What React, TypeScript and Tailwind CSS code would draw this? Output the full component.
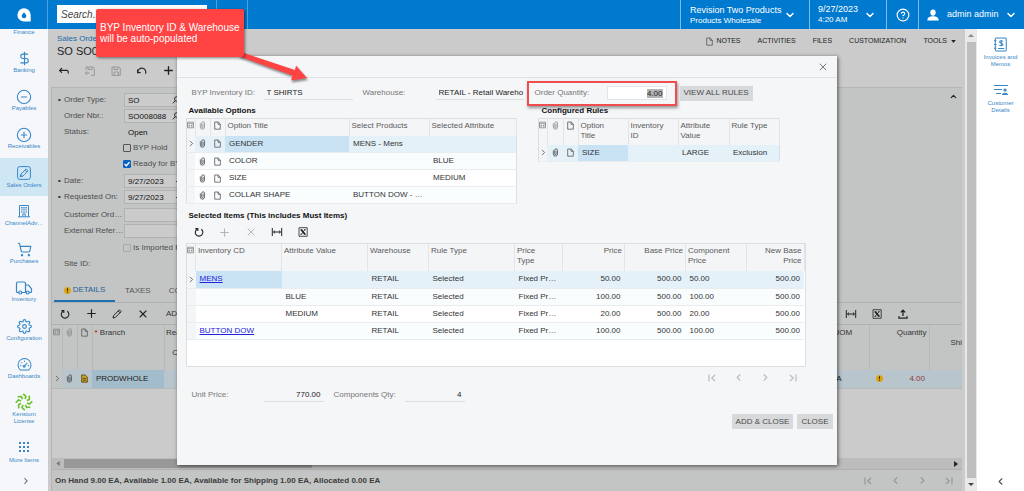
import React, { useEffect, useRef } from "react";
import {
  ChevronDown,
  ChevronLeft,
  ChevronRight,
  CircleHelp,
  CircleMinus,
  CirclePlus,
  DollarSign,
  Plus,
  ShoppingCart,
  Truck,
  X,
} from "lucide-react";
import { FiSettings } from "react-icons/fi";

/* ---------- icons ---------- */

function Clip({ dim = false }: { dim?: boolean }) {
  return (
    <svg viewBox="0 0 8 10" className={`mx-auto h-[9px] w-[7px] ${dim ? "text-[#8c8c8c]" : "text-[#4a4a4a]"}`} fill="none" stroke="currentColor" strokeWidth=".9">
      <path d="M1.5 2.5v4.3a2.4 2.4 0 0 0 4.800 0V2.4a1.600 1.600 0 0 0-3.200 0v4.4a.8.8 0 0 0 1.600 0V3" />
    </svg>
  );
}

function Doc() {
  return (
    <svg viewBox="0 0 8 10" className="mx-auto h-[9px] w-[7px] text-[#555]" fill="none" stroke="currentColor" strokeWidth=".9">
      <path d="M.8 1h4L7.2 3.4V9.2H.8zM4.6 1v2.6h2.6" />
    </svg>
  );
}

function YellowDoc() {
  return (
    <svg viewBox="0 0 8 10" className="mx-auto h-[9px] w-[7px]">
      <path d="M.8 1h4L7.2 3.4V9.2H.8z" fill="#c9a227" stroke="#4a3c06" strokeWidth=".9" />
      <path d="M2.2 5h3.4M2.2 7h3.4" stroke="#4a3c06" strokeWidth=".9" />
    </svg>
  );
}

function RowsIcon() {
  return (
    <svg viewBox="0 0 8 8" className="mx-auto h-2 w-[7px] text-[#808080]" fill="none" stroke="currentColor" strokeWidth=".9">
      <path d="M.6.8h6.8v6.4H.6zM.6 2.6h6.8M2 4.9h1.4M4.6 4.9H6M2.4 4v2M5.5 4v2" />
    </svg>
  );
}

function RowArrow() {
  return <ChevronRight className="mx-auto h-[9px] w-[9px] text-[#555]" strokeWidth={2.2} />;
}

function Refresh() {
  return (
    <svg viewBox="0 0 12 12" className="h-3 w-3" fill="none" stroke="currentColor" strokeWidth="1.1">
      <path d="M4.300 3A3.800 3.800 0 1 0 8.200 3.200" />
      <path d="M2.400 2.600h2.400V5" />
    </svg>
  );
}

function FitColumns() {
  return (
    <svg viewBox="0 0 12 12" className="h-3 w-3" fill="none" stroke="currentColor" strokeWidth="1">
      <path d="M1.3 2v8M10.700 2v8M2.5 6h7M4 4.600 2.5 6 4 7.400M8 4.600 9.5 6 8 7.400" />
    </svg>
  );
}

function Excel() {
  return (
    <svg viewBox="0 0 12 12" className="h-3 w-3" fill="none" stroke="currentColor">
      <path d="M2 1.7h8.2v8.6H2z" strokeWidth=".8" />
      <path d="M4.2 3.7l3.8 4.6" strokeWidth="1.8" />
      <path d="M8 3.7 4.2 8.3M3.4 3.7h2M6.8 8.3h2M7 3.7h1.8M3.4 8.3h1.8" strokeWidth=".8" />
    </svg>
  );
}

function Upload() {
  return (
    <svg viewBox="0 0 12 12" className="h-3 w-3" fill="none" stroke="currentColor" strokeWidth="1.3">
      <path d="M6 8V2.6M3.8 4.4 6 2.2l2.2 2.2M2 8.2v2h8v-2" />
    </svg>
  );
}

function Pencil() {
  return (
    <svg viewBox="0 0 12 12" className="h-3 w-3" fill="none" stroke="currentColor" strokeWidth="1">
      <path d="M2 10l.6-2.4L8.4 1.8l1.8 1.8-5.8 5.8zM7.3 3l1.8 1.8" />
    </svg>
  );
}

function Back() {
  return (
    <svg viewBox="0 0 12 12" className="h-3 w-3" fill="none" stroke="currentColor" strokeWidth="1.1">
      <path d="M4 3 1.6 5.4 4 7.8M1.8 5.4h7.4l1 1V8.600" />
    </svg>
  );
}

function Undo() {
  return (
    <svg viewBox="0 0 12 12" className="h-3 w-3" fill="none" stroke="currentColor" strokeWidth="1.1">
      <path d="M1.600 4.600v3h3M1.900 7.300A4 3.800 0 1 1 9.400 8.800" />
    </svg>
  );
}

function Save({ back = false }: { back?: boolean }) {
  return (
    <svg viewBox="0 0 12 12" className="h-3 w-3" fill="none" stroke="currentColor" strokeWidth="1">
      <path d={back ? "M2 5V2h6.8L10.3 3.5v6.8H7M4 2v2.5h4V2M1.5 8h4M3.2 6.2 1.5 8l1.7 1.8" : "M2 2h6.8L10.3 3.5v6.8H2zM4 2v2.5h4V2M4 10.2V7h4.4v3.2"} />
    </svg>
  );
}

function PageEdge({ end = false }: { end?: boolean }) {
  return (
    <svg viewBox="0 0 10 10" className="h-[10px] w-[10px]" fill="none" stroke="currentColor" strokeWidth="1.2">
      <path d={end ? "M2 2 5.2 5 2 8M8 1.4v7.2" : "M8 2 4.8 5 8 8M2 1.4v7.2"} />
    </svg>
  );
}

function Warning() {
  return (
    <svg viewBox="0 0 8 8" className="h-[7px] w-[7px] shrink-0">
      <circle cx="4" cy="4" r="4" fill="#dba50f" />
      <path d="M4 1.5v3M4 5.4v1.1" stroke="#3a2b00" strokeWidth="1.2" />
    </svg>
  );
}

function Magnifier() {
  return (
    <svg viewBox="0 0 8 8" className="h-2 w-2 shrink-0" fill="none" stroke="#333" strokeWidth="1">
      <circle cx="4.8" cy="3" r="2.3" />
      <path d="M3.2 4.8.8 7.4" />
    </svg>
  );
}

function Building() {
  return (
    <svg viewBox="0 0 14 14" className="h-[14px] w-[14px]" fill="none" stroke="currentColor" strokeWidth="1">
      <path d="M2.5 12.5V1.5h9v11M1 12.8h12M5.8 12.5V10h2.4v2.5" />
      <path d="M4.2 3.7h1.4M6.3 3.7h1.4M8.4 3.7h1.4M4.2 5.9h1.4M6.3 5.9h1.4M8.4 5.9h1.4M4.2 8.1h1.4M6.3 8.1h1.4M8.4 8.1h1.4" strokeWidth="1.4" />
    </svg>
  );
}

function SalesIcon() {
  return (
    <svg viewBox="0 0 14 14" className="h-[14px] w-[14px]" fill="none" stroke="currentColor" strokeWidth="1">
      <rect x=".6" y=".6" width="12.8" height="12.8" rx="2.2" />
      <path d="M3.2 10.8l.6-2.5 5.4-5.4 1.9 1.9-5.4 5.4zM8 4.2l1.8 1.8M3.8 8.5l1.7 1.7" />
    </svg>
  );
}

function Dial() {
  return (
    <svg viewBox="0 0 16 14" className="h-[13px] w-[15px]" fill="none" stroke="currentColor" strokeWidth="1.100">
      <path d="M3.400 12.800A7 7 0 1 1 12.600 12.800z" />
      <path d="M7.300 9.200 11 5.200M3.400 8.200H4.600M4.800 4.600l.8.8M8 3v1.200M11.600 8.200h1.200" />
      <circle cx="7.600" cy="9" r="1" />
    </svg>
  );
}

function Pinwheel() {
  return (
    <svg viewBox="-9 -9 18 18" className="h-[18px] w-[18px]" fill="none" stroke="#6cc02b" strokeWidth="1.6">
      {[0, 45, 90, 135, 180, 225, 270, 315].map((a) => (
        <path key={a} d="M1-3 2-5.600-.8-8.200" transform={`rotate(${a})`} />
      ))}
    </svg>
  );
}

function Dots() {
  return (
    <svg viewBox="0 0 12 12" className="h-3 w-3" fill="currentColor">
      {[1, 5, 9].map((y) => [1, 5, 9].map((x) => <rect key={`${x}-${y}`} x={x} y={y} width="2" height="2" />))}
    </svg>
  );
}

function InvoiceIcon() {
  return (
    <svg viewBox="0 0 14 16" className="h-[15px] w-[13px]" fill="none" stroke="currentColor" strokeWidth="1.1">
      <rect x="1.4" y="1" width="11.8" height="14" rx="1" />
      <path d="M0 4h2.6M0 8h2.6M0 12h2.6M4.4 12.4h6.6M9.6 4.6C8.6 3.7 6 3.7 6 5.3c0 1.7 3.6.9 3.6 2.7 0 1.7-2.8 1.6-3.8.6M7.8 3.2v6.8" />
    </svg>
  );
}

function CustomerIcon() {
  return (
    <svg viewBox="0 0 14 12" className="h-3 w-[14px]" fill="none" stroke="currentColor" strokeWidth="1.2">
      <path d="M0 1.5h14M0 5.5h8M2 9.5h5" />
      <circle cx="11" cy="6" r="1.6" fill="currentColor" stroke="none" />
      <path d="M8 11c0-3 6-3 6 0z" fill="currentColor" stroke="none" />
    </svg>
  );
}

/* ---------- shell ---------- */

const navItems: { label: string; icon: React.ReactNode; active?: boolean }[] = [
  { label: "Banking", icon: <DollarSign className="h-[15px] w-[15px]" strokeWidth={1.8} /> },
  { label: "Payables", icon: <CircleMinus className="h-4 w-4" strokeWidth={1.6} /> },
  { label: "Receivables", icon: <CirclePlus className="h-4 w-4" strokeWidth={1.6} /> },
  { label: "Sales Orders", icon: <SalesIcon />, active: true },
  { label: "ChannelAdv…", icon: <Building /> },
  { label: "Purchases", icon: <ShoppingCart className="h-[15px] w-[15px]" strokeWidth={1.8} /> },
  { label: "Inventory", icon: <Truck className="h-[18px] w-[18px]" strokeWidth={1.6} /> },
  { label: "Configuration", icon: <FiSettings className="h-[15px] w-[15px]" strokeWidth={1.8} /> },
  { label: "Dashboards", icon: <Dial /> },
];

function TopBar() {
  return (
    <header className="flex h-[29px] shrink-0 items-stretch bg-[#007acf] text-white">
      <div className="flex w-12 shrink-0 items-center justify-center border-r border-[#4da2dd]">
        <svg viewBox="0 0 14 14" className="h-[14px] w-[14px]">
          <path d="M7 .3a6.7 6.7 0 0 1 6.7 6.7v6.5H7A6.6 6.6 0 0 1 7 .3zM7 4.2 4.9 7a2.3 2.3 0 1 0 4.2 0z" fill="white" fillRule="evenodd" />
        </svg>
      </div>
      <div className="flex items-start border-r border-[#4da2dd] py-[5px] pr-[9px] pl-[9px]">
        <input aria-label="Search" placeholder="Search..." className="h-[18px] w-[150px] bg-white px-1 text-[10px] text-[#333] italic outline-none placeholder:text-[#444]" />
      </div>
      <div className="w-[31px] border-r border-[#4da2dd]" />
      <div className="flex-1" />
      <button className="flex w-[129px] items-center justify-between border-l border-[#7fbbe6] pr-[17px] pl-[9px] text-left">
        <span>
          <span className="block text-[9px] leading-[11px] whitespace-nowrap">Revision Two Products</span>
          <span className="block text-[8px] leading-[9px] whitespace-nowrap">Products Wholesale</span>
        </span>
        <ChevronDown className="-mr-1 h-3 w-3 shrink-0" strokeWidth={3} />
      </button>
      <button className="flex w-[77px] items-center justify-between border-l border-[#7fbbe6] pr-[10px] pl-2 text-left">
        <span>
          <span className="block text-[9px] leading-[11px]">9/27/2023</span>
          <span className="block text-[8px] leading-[10px]">4:20 AM</span>
        </span>
        <ChevronDown className="h-3 w-3" strokeWidth={3} />
      </button>
      <button aria-label="Help" className="flex w-8 items-center justify-center border-l border-[#7fbbe6]">
        <CircleHelp className="h-[14px] w-[14px]" strokeWidth={2} />
      </button>
      <button className="flex w-[106px] items-center border-l border-[#7fbbe6] pr-[7px] pl-2 text-[9px]">
        <svg viewBox="0 0 12 12" className="h-3 w-3" fill="white">
          <ellipse cx="6" cy="3.6" rx="2.7" ry="3.1" />
          <path d="M.3 11.5c0-3 2.4-4.2 5.7-4.2s5.7 1.2 5.7 4.2z" />
        </svg>
        <span className="ml-2">admin admin</span>
        <ChevronDown className="ml-auto h-3 w-3" strokeWidth={3} />
      </button>
    </header>
  );
}

function SideNav() {
  return (
    <nav className="flex w-12 shrink-0 flex-col bg-[#f5f7fa] text-center text-[6px] leading-[7px] text-[#3787c8]">
      <a href="#finance" className="h-[14px] shrink-0">Finance</a>
      {navItems.map((n) => (
        <a key={n.label} href="#nav" className={`flex min-h-0 shrink-0 grow basis-[38px] flex-col items-center ${n.active ? "bg-[#cfe6f5]" : ""}`}>
          <span className="flex h-6 items-center justify-center pt-[7px]">{n.icon}</span>
          <span className="whitespace-nowrap">{n.label}</span>
        </a>
      ))}
      <a href="#kensium" className="flex h-[46px] shrink-0 flex-col items-center">
        <span className="flex h-6 items-center pt-[7px]"><Pinwheel /></span>
        <span className="w-8">Kensium License</span>
      </a>
      <a href="#more" className="flex h-[38px] shrink-0 flex-col items-center">
        <span className="flex h-6 items-center pt-[5px]"><Dots /></span>
        <span>More Items</span>
      </a>
      <button aria-label="Expand menu" className="flex h-5 shrink-0 items-center justify-center text-[#555]">
        <ChevronRight className="ml-1 h-[10px] w-[10px]" strokeWidth={2.5} />
      </button>
    </nav>
  );
}

function RightPanel() {
  return (
    <aside className="flex w-[47px] shrink-0 flex-col items-center bg-white text-center text-[6px] leading-[7px] text-[#3787c8]">
      <a href="#invoices" className="mt-2 flex flex-col items-center gap-[2px]">
        <InvoiceIcon />
        <span className="w-9 whitespace-nowrap">Invoices and<br />Memos</span>
      </a>
      <a href="#customer" className="mt-4 flex flex-col items-center gap-1">
        <CustomerIcon />
        <span className="w-9">Customer Details</span>
      </a>
      <button aria-label="Collapse panel" className="mt-auto mb-1 text-[#555]">
        <ChevronLeft className="h-[11px] w-[11px]" strokeWidth={2.5} />
      </button>
    </aside>
  );
}

function VerticalScroll() {
  return (
    <div className="flex w-[12px] shrink-0 flex-col items-center bg-[#e9e9e9]">
      <svg viewBox="0 0 8 6" className="my-1 h-[5px] w-[6px]"><path d="M0 5h8L4 1z" fill="#8a8a8a" /></svg>
      <div className="w-[9px] flex-1 bg-[#bfbfbf]" />
      <svg viewBox="0 0 8 6" className="my-1 h-[5px] w-[6px]"><path d="M0 1h8L4 5z" fill="#444" /></svg>
    </div>
  );
}

/* ---------- order form ---------- */

function FormRow({ label, id, value, required, kind = "box" }: { label: string; id: string; value?: string; required?: boolean; kind?: "box" | "search" | "date" | "plain" }) {
  return (
    <div className="flex h-4 items-center">
      <span className="w-[12px] pl-[6px] text-[8px] leading-none font-bold text-[#333]">{required ? "•" : ""}</span>
      <label htmlFor={id} className="w-[60px] text-[#4d4d4d]">{label}</label>
      <div className={`flex h-[14px] w-[60px] items-center border ${kind === "plain" ? "border-transparent" : "border-[#b1b3b3] bg-[#cbcbcb]"}`}>
        <input id={id} readOnly defaultValue={value} className="h-3 w-[47px] bg-transparent pl-[3px] text-[8px] text-[#111] outline-none" />
        {kind === "search" && <Magnifier />}
        {kind === "date" && <span className="ml-1 h-px w-2 bg-[#444]" />}
      </div>
    </div>
  );
}

function CheckRow({ label, id, checked, muted }: { label: string; id: string; checked?: boolean; muted?: boolean }) {
  return (
    <div className="flex h-4 items-center pl-[71px]">
      <span className="relative flex">
        <input id={id} type="checkbox" defaultChecked={checked} className={`h-2 w-2 appearance-none rounded-[1px] border ${checked ? "border-[#0a61c4] bg-[#0a61c4]" : muted ? "border-[#a8a8a8]" : "border-[#555]"}`} />
        {checked && (
          <svg viewBox="0 0 8 8" className="pointer-events-none absolute inset-0 h-2 w-2" fill="none" stroke="white" strokeWidth="1.3"><path d="M1.6 4 3.3 5.8 6.5 2.2" /></svg>
        )}
      </span>
      <label htmlFor={id} className="ml-[2px] whitespace-nowrap text-[#4d4d4d]">{label}</label>
    </div>
  );
}

function ToolButton({ label, children, faded }: { label: string; children: React.ReactNode; faded?: boolean }) {
  return (
    <button aria-label={label} className={`flex w-[26px] items-center justify-center ${faded ? "opacity-30" : ""}`}>
      {children}
    </button>
  );
}

function Pager() {
  return (
    <div className="flex items-center gap-px">
      <ToolButton label="First page"><PageEdge /></ToolButton>
      <ToolButton label="Previous page"><ChevronLeft className="h-[11px] w-[11px]" strokeWidth={2.5} /></ToolButton>
      <ToolButton label="Next page"><ChevronRight className="h-[11px] w-[11px]" strokeWidth={2.5} /></ToolButton>
      <ToolButton label="Last page"><PageEdge end /></ToolButton>
    </div>
  );
}

function OrderPage() {
  return (
    <div className="flex min-w-0 flex-1 flex-col pr-[3px] pl-[3px]">
      <div className="flex h-[58px] shrink-0 flex-col">
        <div className="flex items-start justify-between pt-[5px]">
          <div className="pl-[6px]">
            <a href="#orders" className="block text-[8px] leading-[10px] text-[#1f6aa8]">Sales Orders</a>
            <h1 className="text-[11px] leading-[14px] text-[#222]">SO SO008088</h1>
          </div>
          <div className="mt-[2px] flex gap-[17px] pr-[6px] text-[7px] leading-[10px] text-[#222]">
            <button className="flex items-center gap-[3px]"><Doc />NOTES</button>
            <button>ACTIVITIES</button>
            <button>FILES</button>
            <button>CUSTOMIZATION</button>
            <button className="flex items-center gap-1">TOOLS
              <svg viewBox="0 0 6 4" className="h-[3px] w-[5px]"><path d="M0 0h6L3 4z" fill="#222" /></svg>
            </button>
          </div>
        </div>
        <div className="mt-[6px] flex text-[#222]">
          <ToolButton label="Back"><Back /></ToolButton>
          <ToolButton label="Save and close" faded><Save back /></ToolButton>
          <ToolButton label="Save" faded><Save /></ToolButton>
          <ToolButton label="Undo"><Undo /></ToolButton>
          <ToolButton label="Add"><Plus className="h-[13px] w-[13px]" strokeWidth={2.5} /></ToolButton>
        </div>
      </div>

      <section className="flex shrink-0 items-start justify-between border-t border-l border-[#b4b6b6] bg-[#c3c5c5] pt-1 pb-2 text-[8px] leading-[10px]">
        <div className="flex flex-col">
          <FormRow id="type" label="Order Type:" value="SO" required kind="search" />
          <FormRow id="nbr" label="Order Nbr.:" value="SO008088" kind="search" />
          <FormRow id="status" label="Status:" value="Open" kind="plain" />
          <CheckRow id="hold" label="BYP Hold" />
          <CheckRow id="ready" label="Ready for BY" checked />
          <div className="mt-px">
            <FormRow id="date" label="Date:" value="9/27/2023" required kind="date" />
            <FormRow id="req" label="Requested On:" value="9/27/2023" required kind="date" />
          </div>
          <div className="mt-[2px]">
            <FormRow id="cust" label="Customer Ord…" />
            <FormRow id="ext" label="External Refer…" />
          </div>
          <div className="mt-px">
            <CheckRow id="imp" label="Is Imported F" muted />
            <FormRow id="site" label="Site ID:" kind="plain" />
          </div>
        </div>
        <button aria-label="Collapse" className="pr-1">
          <ChevronDown className="h-[9px] w-[9px] rotate-180 text-[#222]" strokeWidth={3} />
        </button>
      </section>

      <section className="flex min-h-0 flex-1 flex-col border-l border-[#b4b6b6] bg-[#c3c5c5] text-[8px] leading-[10px]">
        <div className="flex h-[23px] shrink-0 items-stretch border-b border-[#b0b2b2] pl-[2px]">
          <button className="flex w-[61px] items-center justify-center gap-[2px] border-b-2 border-[#1f6fae] text-[#1f5f96]"><Warning />DETAILS</button>
          <button className="pl-[10px] text-[#555]">TAXES</button>
          <button className="pl-[18px] text-[#555]">COMMISSIONS</button>
        </div>
        <div className="flex h-[22px] shrink-0 items-center border-b border-[#b0b2b2] text-[#222]">
          <ToolButton label="Refresh"><Refresh /></ToolButton>
          <ToolButton label="Add row"><Plus className="h-[13px] w-[13px]" strokeWidth={2.2} /></ToolButton>
          <ToolButton label="Edit"><Pencil /></ToolButton>
          <ToolButton label="Delete"><X className="h-3 w-3" strokeWidth={2.2} /></ToolButton>
          <button className="ml-[10px] text-[#333]">ADD ITEMS</button>
          <div className="ml-auto flex pr-[46px]">
            <ToolButton label="Fit columns"><FitColumns /></ToolButton>
            <ToolButton label="Export"><Excel /></ToolButton>
            <ToolButton label="Upload"><Upload /></ToolButton>
          </div>
        </div>
        <div className="min-h-0 flex-1 overflow-hidden bg-[#cbcbcb]">
          <table className="w-full table-fixed border-collapse">
            <colgroup>
              <col className="w-[10px]" /><col className="w-[15px]" /><col className="w-[15px]" /><col className="w-[72px]" /><col className="w-[40px]" /><col /><col className="w-[40px]" /><col className="w-[60px]" /><col className="w-[33px]" />
            </colgroup>
            <thead>
              <tr className="h-[45px] bg-[#c3c5c5] text-left align-top text-[#333] [&>th]:border-r [&>th]:border-[#b7b9b9] [&>th]:pt-[3px] [&>th]:font-medium">
                <th><RowsIcon /></th>
                <th><Clip dim /></th>
                <th><Doc /></th>
                <th className="pl-[2px]"><span className="text-[#b00]">*</span> Branch</th>
                <th className="pr-[10px] text-right">Reason<br />Inv.<br />Credit</th>
                <th />
                <th className="pl-1">UOM</th>
                <th className="pr-[2px] text-right">Quantity</th>
                <th className="border-none! pt-[13px]! text-right">Shi</th>
              </tr>
            </thead>
            <tbody>
              <tr className="h-[18px] border-b border-[#b7b9b9] bg-[#b9c5cd] text-[#222]">
                <td className="bg-[#c3c5c5]"><RowArrow /></td>
                <td><Clip /></td>
                <td><YellowDoc /></td>
                <td className="bg-[#a3bccb] pl-1">PRODWHOLE</td>
                <td />
                <td />
                <td className="pl-[2px]">EA</td>
                <td><span className="flex items-center justify-between pr-1 pl-[7px] text-[#8c3a3f]"><Warning />4.00</span></td>
                <td />
              </tr>
            </tbody>
          </table>
        </div>
        <div className="flex h-[11px] shrink-0 items-center justify-between bg-[#bcbcbc] pr-1 pl-1">
          <svg viewBox="0 0 4 6" className="mr-1 h-[5px] w-1"><path d="M4 0v6L0 3z" fill="#777" /></svg>
          <div className="h-[9px] w-[248px] bg-[#989898]" />
          <div className="flex-1" />
          <svg viewBox="0 0 4 6" className="h-[6px] w-1"><path d="M0 0v6l4-3z" fill="#222" /></svg>
        </div>
        <div className="flex h-[22px] shrink-0 items-center justify-between border-t border-[#b0b2b2] pl-[3px] font-bold text-[#3c3c3c]">
          <span>On Hand 9.00 EA, Available 1.00 EA, Available for Shipping 1.00 EA, Allocated 0.00 EA</span>
          <div className="text-[#979797]"><Pager /></div>
        </div>
      </section>
    </div>
  );
}

/* ---------- dialog ---------- */

const headRow = "bg-[#f4f5f7] text-left align-top text-[#5a5a5a] [&>th]:border-r [&>th]:border-[#e2e4e6] [&>th]:px-[2px] [&>th]:pt-[2px] [&>th]:font-medium";
const bodyRow = "h-[17px] border-b border-[#e9edf0] [&>td]:whitespace-nowrap [&>td]:overflow-hidden [&>td]:text-ellipsis [&>td]:px-1";
const narrow = "px-0!";

const options = [
  ["GENDER", "MENS - Mens", ""],
  ["COLOR", "", "BLUE"],
  ["SIZE", "", "MEDIUM"],
  ["COLLAR SHAPE", "BUTTON DOW - …", ""],
];

const items = [
  ["MENS", "", "50.00"],
  ["", "BLUE", "100.00"],
  ["", "MEDIUM", "20.00"],
  ["BUTTON DOW", "", "100.00"],
];

function OptionsTable() {
  return (
    <table className="w-[330px] table-fixed border-collapse border border-[#dcdee0]">
      <colgroup>
        <col className="w-[9px]" /><col className="w-[15px]" /><col className="w-[15px]" /><col className="w-[124px]" /><col className="w-[80px]" /><col className="w-[87px]" />
      </colgroup>
      <thead>
        <tr className={`h-[17px] ${headRow}`}>
          <th className={narrow}><RowsIcon /></th>
          <th className={narrow}><Clip dim /></th>
          <th className={narrow}><Doc /></th>
          <th>Option Title</th><th>Select Products</th><th>Selected Attribute</th>
        </tr>
      </thead>
      <tbody className="text-[#333]">
        {options.map((o, i) => (
          <tr key={o[0]} className={`${bodyRow} ${i === 0 ? "bg-[#e4f1f9]" : i % 2 ? "bg-[#fafdfe]" : "bg-white"}`}>
            <td className={`bg-[#f4f5f7] ${narrow}`}>{i === 0 && <RowArrow />}</td>
            <td className={narrow}><Clip /></td>
            <td className={narrow}><Doc /></td>
            <td className={i === 0 ? "bg-[#c9e3f4]" : ""}>{o[0]}</td>
            <td>{o[1]}</td>
            <td>{o[2]}</td>
          </tr>
        ))}
      </tbody>
    </table>
  );
}

function RulesTable() {
  return (
    <table className="w-[241px] table-fixed border-collapse border border-[#dcdee0]">
      <colgroup>
        <col className="w-[9px]" /><col className="w-[16px]" /><col className="w-[15px]" /><col className="w-[50px]" /><col className="w-[50px]" /><col className="w-[51px]" /><col className="w-[50px]" />
      </colgroup>
      <thead>
        <tr className={`h-[26px] ${headRow}`}>
          <th className={narrow}><RowsIcon /></th>
          <th className={narrow}><Clip dim /></th>
          <th className={narrow}><Doc /></th>
          <th>Option<br />Title</th><th>Inventory<br />ID</th><th>Attribute<br />Value</th><th>Rule Type</th>
        </tr>
      </thead>
      <tbody className="text-[#333]">
        <tr className={`${bodyRow} bg-[#e4f1f9]`}>
          <td className={`bg-[#f4f5f7] ${narrow}`}><RowArrow /></td>
          <td className={narrow}><Clip /></td>
          <td className={narrow}><Doc /></td>
          <td className="bg-[#c9e3f4]">SIZE</td><td /><td>LARGE</td><td>Exclusion</td>
        </tr>
      </tbody>
    </table>
  );
}

function ItemsTable() {
  return (
    <div className="h-[124px] border border-[#dcdee0] bg-white">
      <table className="w-full table-fixed border-collapse">
        <colgroup>
          <col className="w-[9px]" /><col className="w-[86px]" /><col className="w-[86px]" /><col className="w-[61px]" /><col className="w-[86px]" /><col className="w-[48px]" /><col className="w-[62px]" /><col className="w-[61px]" /><col className="w-[61px]" /><col />
        </colgroup>
        <thead>
          <tr className={`h-[27px] ${headRow}`}>
            <th className={narrow}><RowsIcon /></th>
            <th>Inventory CD</th><th>Attribute Value</th><th>Warehouse</th><th>Rule Type</th><th>Price<br />Type</th>
            <th className="text-right">Price</th><th className="text-right">Base Price</th><th>Component<br />Price</th><th className="text-right">New Base<br />Price</th>
          </tr>
        </thead>
        <tbody className="text-[#333]">
          {items.map((r, i) => (
            <tr key={r[0] + r[1]} className={`${bodyRow} ${i === 0 ? "bg-[#e4f1f9]" : i % 2 ? "bg-[#fafdfe]" : "bg-white"}`}>
              <td className={`bg-[#f4f5f7] ${narrow}`}>{i === 0 && <RowArrow />}</td>
              <td className={i === 0 ? "bg-[#c9e3f4]" : ""}>{r[0] && <a href="#item" className="text-[#2222dd] underline">{r[0]}</a>}</td>
              <td>{r[1]}</td>
              <td>RETAIL</td>
              <td>Selected</td>
              <td>Fixed Pr…</td>
              <td className="text-right">{r[2]}</td>
              <td className="text-right">500.00</td>
              <td>{r[2]}</td>
              <td className="text-right">500.00</td>
            </tr>
          ))}
        </tbody>
      </table>
    </div>
  );
}

const underlined = "h-[14px] border-b border-[#dcdee0] bg-transparent px-[3px] text-[8px] text-[#222] outline-none";

function Dialog() {
  const qty = useRef<HTMLInputElement>(null);
  useEffect(() => {
    qty.current?.focus({ preventScroll: true });
    qty.current?.select();
  }, []);
  return (
    <div role="dialog" aria-label="Configure item" className="flex w-[660px] flex-col bg-[#f5f6f8] pb-9 text-[8px] leading-[10px] text-[#777] shadow-[1px_1px_4px_rgba(0,0,0,0.6)]">
      <div className="flex h-[22px] items-center justify-end border-b border-[#dfe1e3] pr-2">
        <button aria-label="Close" className="text-[#777]"><X className="h-3 w-3" strokeWidth={2} /></button>
      </div>

      <div className="mt-[3px] flex h-6 items-center pl-[15px]">
        <label htmlFor="inv" className="w-[72px]">BYP Inventory ID:</label>
        <input id="inv" readOnly value="T SHIRTS" className={`w-[89px] ${underlined}`} />
        <label htmlFor="wh" className="ml-[10px] w-[73px]">Warehouse:</label>
        <input id="wh" readOnly value="RETAIL - Retail Wareho" className={`w-[88px] pr-0! ${underlined}`} />
        <div className="ml-[3px] flex h-[25px] w-[150px] items-center border-2 border-[#f04e4e] pl-[6px] shadow-[1px_2px_3px_rgba(0,0,0,0.4)]">
          <label htmlFor="qty" className="w-[72px]">Order Quantity:</label>
          <input id="qty" ref={qty} defaultValue="4.00" className="h-[14px] w-[60px] border border-[#e3e5e7] bg-white px-[3px] text-right text-[8px] text-[#222] outline-none selection:bg-[#b4b4b4] selection:text-[#222]" />
        </div>
        <button className="ml-[3px] h-[15px] bg-[#d8d9da] px-1 whitespace-nowrap text-[#4a4a4a]">VIEW ALL RULES</button>
      </div>

      <div className="mt-px flex items-start gap-[21px] pl-[9px]">
        <div>
          <h2 className="pb-[2px] pl-[3px] font-bold text-[#111]">Available Options</h2>
          <OptionsTable />
        </div>
        <div>
          <h2 className="pb-[2px] pl-1 font-bold text-[#111]">Configured Rules</h2>
          <RulesTable />
        </div>
      </div>

      <div className="mt-[7px] pr-[31px] pl-[9px]">
        <h2 className="pl-[3px] font-bold text-[#111]">Selected Items (This includes Must Items)</h2>
        <div className="flex h-[22px] items-center text-[#222]">
          <ToolButton label="Refresh"><Refresh /></ToolButton>
          <ToolButton label="Add" faded><Plus className="h-[13px] w-[13px]" strokeWidth={2} /></ToolButton>
          <ToolButton label="Remove" faded><X className="h-3 w-3" strokeWidth={2} /></ToolButton>
          <ToolButton label="Fit columns"><FitColumns /></ToolButton>
          <ToolButton label="Export"><Excel /></ToolButton>
        </div>
        <ItemsTable />
        <div className="flex h-[21px] items-center justify-end text-[#bcbcbc]"><Pager /></div>
      </div>

      <div className="flex items-center pl-[15px]">
        <label htmlFor="unit" className="w-[72px]">Unit Price:</label>
        <input id="unit" readOnly value="770.00" className={`w-[60px] text-right ${underlined}`} />
        <label htmlFor="cq" className="ml-[10px] w-[71px]">Components Qty:</label>
        <input id="cq" readOnly value="4" className={`w-[60px] text-right ${underlined}`} />
      </div>

      <div className="mt-3 flex justify-end gap-1 pr-1 text-[#4a4a4a]">
        <button className="h-[15px] bg-[#d8d9da] px-1">ADD &amp; CLOSE</button>
        <button className="h-[15px] bg-[#d8d9da] px-1">CLOSE</button>
      </div>
    </div>
  );
}

function Callout() {
  return (
    <div className="pointer-events-none absolute top-[9px] left-24">
      <svg viewBox="0 0 76 40" className="absolute top-[39px] left-[138px] h-10 w-[76px] drop-shadow-[1px_2px_1px_rgba(0,0,0,0.45)]" fill="#ff4343">
        <path d="M4 8 10 5 61 22 62 17.500 73 30 57 32.500 58.500 27.500z" />
      </svg>
      <div className="relative h-12 w-[148px] rounded-[2px] bg-[#ff4343] pt-[13px] pl-1 text-[10px] leading-[11px] whitespace-nowrap text-white shadow-[1px_1px_3px_rgba(0,0,0,0.5)]">
        BYP Inventory ID &amp; Warehouse
        <br />
        will be auto-populated
      </div>
    </div>
  );
}

export default function App() {
  return (
    <div className="relative flex h-screen flex-col overflow-hidden bg-white font-['Liberation_Sans',Arial,sans-serif]">
      <TopBar />
      <div className="flex min-h-0 flex-1">
        <SideNav />
        <main className="relative flex min-w-0 flex-1 bg-[#cbcbcb]">
          <OrderPage />
          <div className="absolute inset-0 flex items-start justify-center pt-[27px]">
            <Dialog />
          </div>
        </main>
        <VerticalScroll />
        <RightPanel />
      </div>
      <Callout />
    </div>
  );
}
